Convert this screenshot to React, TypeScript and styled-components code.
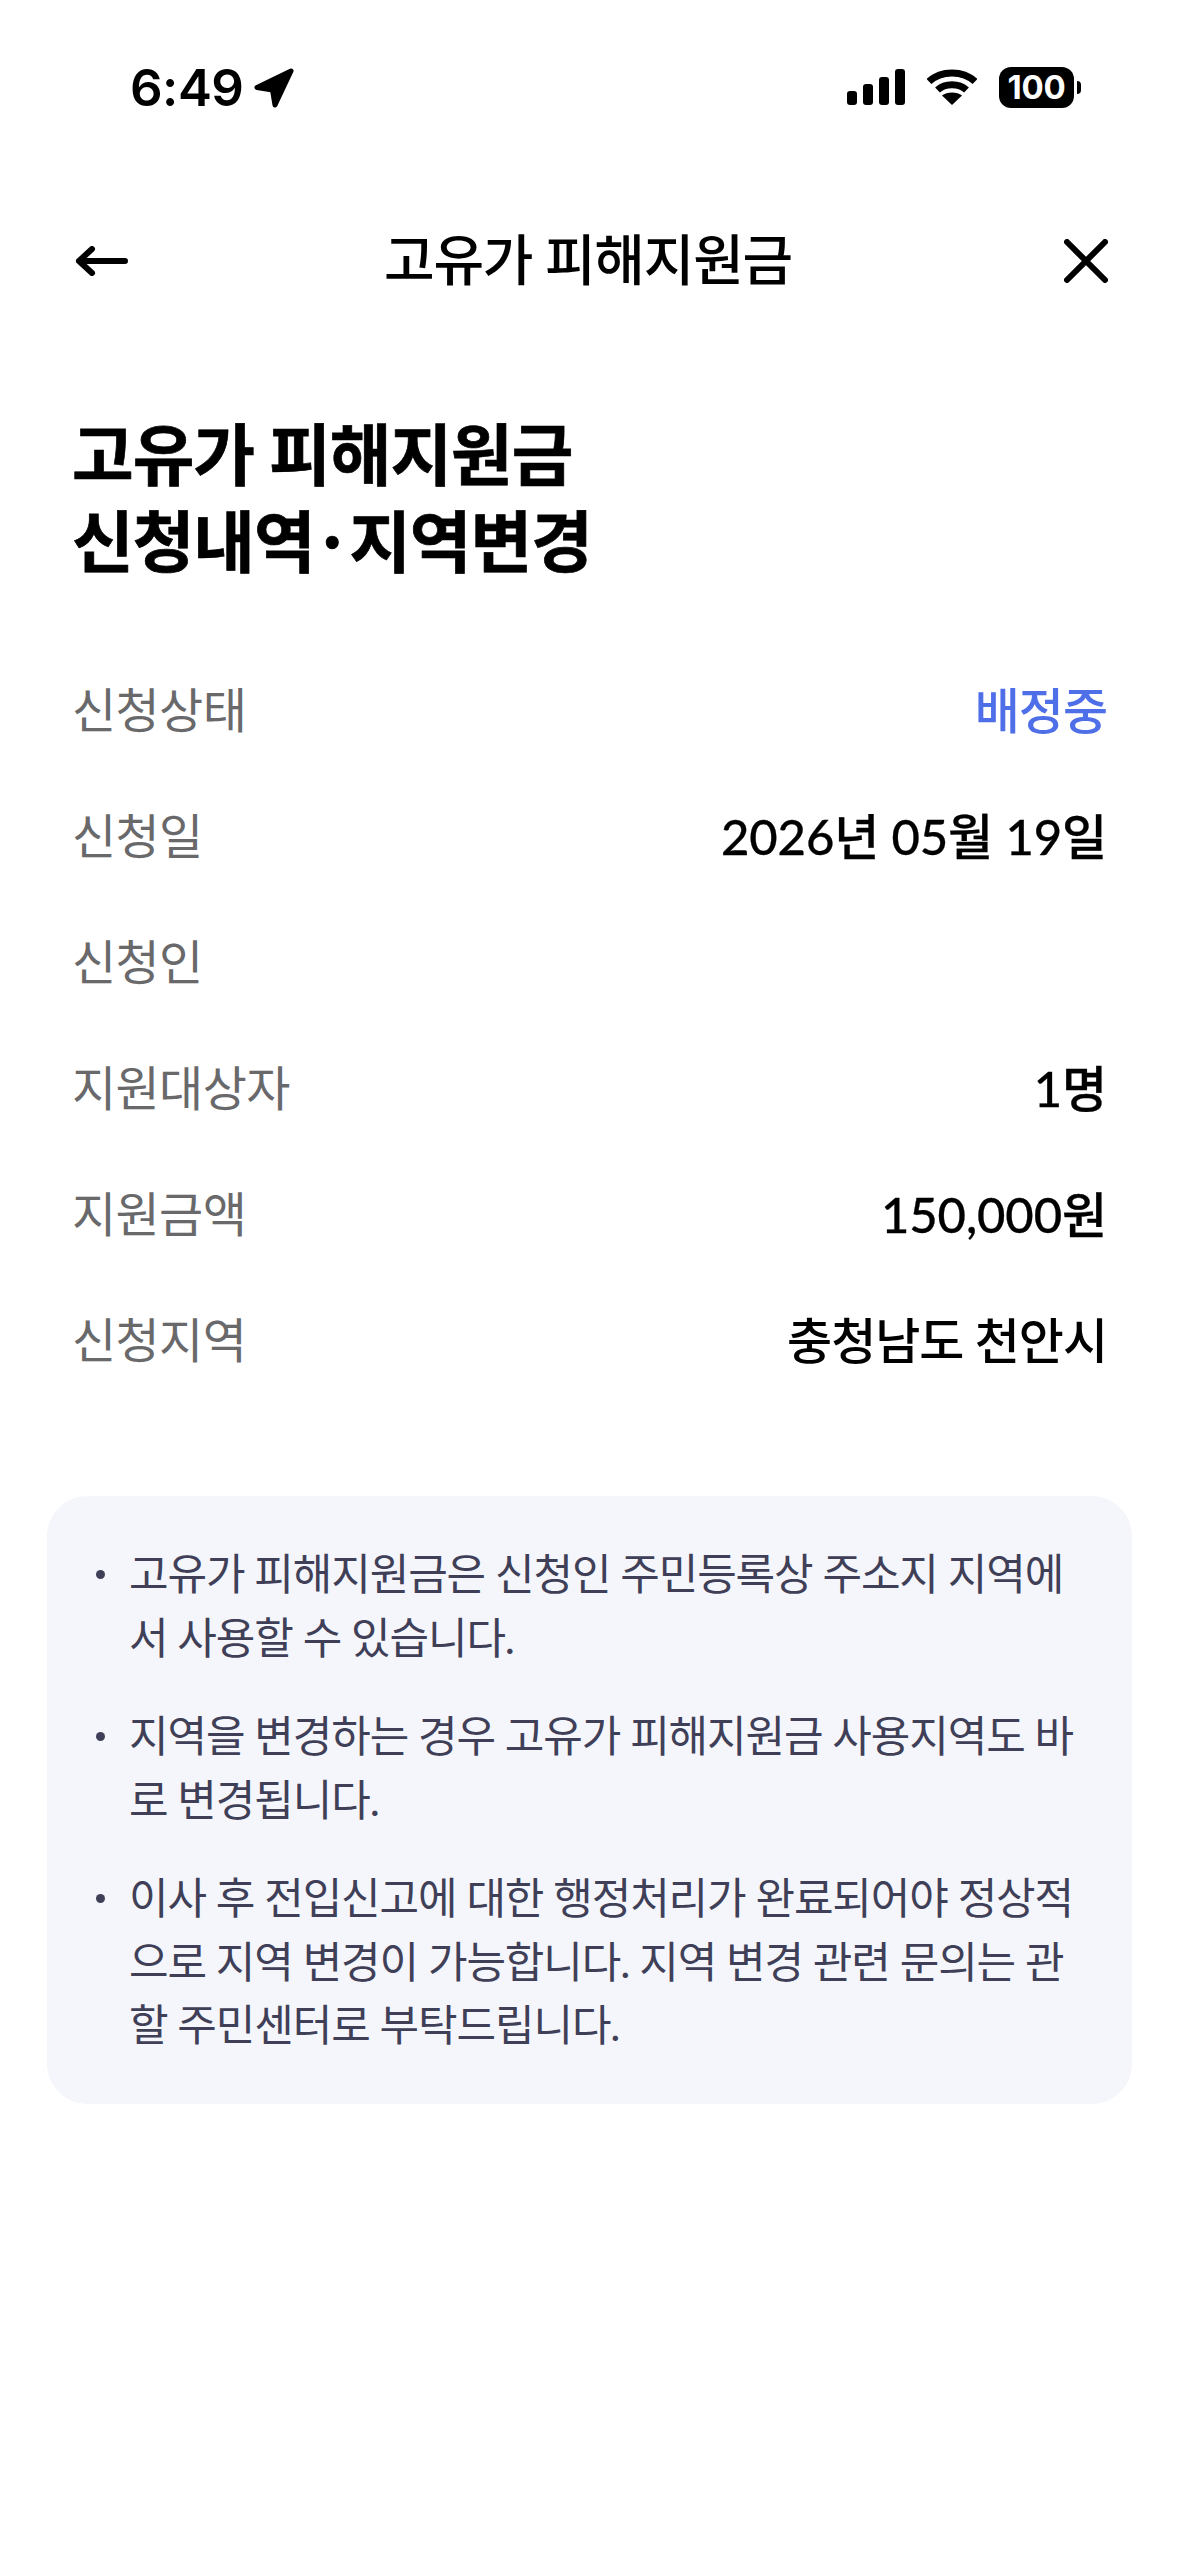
import React from "react";
import styled, { createGlobalStyle } from "styled-components";

const Global = createGlobalStyle`
  html, body { margin: 0; padding: 0; background: #fff; }
  body { font-family: Lato, "Noto Sans CJK KR", sans-serif; }
`;
const Page = styled.div`
  width: 1179px; height: 2556px; background: #fff; overflow: hidden; box-sizing: border-box;
`;
const StatusBar = styled.div`
  height: 217px; box-sizing: border-box; padding: 62px 105px 0 130px;
  display: flex; justify-content: space-between; align-items: flex-start;
`;
const Clock = styled.div`
  display: flex; align-items: center; gap: 11px;
  font: 600 51px/52px Inter, sans-serif; color: #000; letter-spacing: -0.5px;
`;
const StatusIcons = styled.div`
  display: flex; align-items: center; gap: 22px; height: 50px;
`;
const Battery = styled.div`
  position: relative; width: 75px; height: 41px; border-radius: 12px; background: #000; color: #fff;
  display: flex; align-items: center; justify-content: center;
  font: 700 33px/41px Inter, sans-serif; letter-spacing: -0.3px;
  &::after { content: ""; position: absolute; right: -7px; top: 14px; width: 4px; height: 13px; background: #000; border-radius: 0 7px 7px 0; }
`;
const NavBar = styled.div`
  height: 88px; padding: 0 71px; display: grid; grid-template-columns: 1fr auto 1fr; align-items: center;
`;
const NavTitle = styled.div`
  font: 500 55px/84px Lato, "Noto Sans CJK KR", sans-serif; color: #000; letter-spacing: -1.2px; padding: 0 3px 4px 0;
`;
const NavLeft = styled.div`
  display: flex; justify-content: flex-start; align-items: center; padding-left: 4px;
`;
const NavRight = styled.div`
  display: flex; justify-content: flex-end; align-items: center;
`;
const Title = styled.h1`
  margin: 108px 0 0; padding: 0 72px;
  font: 700 67px/83px Lato, "Noto Sans CJK KR", sans-serif; color: #000; letter-spacing: -1px;
  -webkit-text-stroke: 0.7px #000;
`;
const TitleDot = styled.span`
  font-family: "Noto Sans CJK KR", sans-serif; margin: 0 -2px;
`;
const Rows = styled.div`
  margin-top: 64px; padding: 0 72px; display: flex; flex-direction: column;
`;
const Row = styled.div`
  height: 126px; display: flex; justify-content: space-between; align-items: center;
`;
const Label = styled.span`
  font: 400 48px/60px Lato, "Noto Sans CJK KR", sans-serif; color: #69696b; letter-spacing: -0.6px;
`;
const Value = styled.span<{ $accent?: boolean; $latin?: boolean }>`
  font: 500 49px/60px Lato, "Noto Sans CJK KR", sans-serif;
  letter-spacing: ${(p) => (p.$latin ? "-0.1px" : "-1px")};
  color: ${(p) => (p.$accent ? "#4f6fe8" : "#000")};
  -webkit-text-stroke: ${(p) => (p.$latin ? "0.3px currentColor" : "0")};
`;
const NoteCard = styled.ul`
  margin: 93px 47px 0; padding: 46px 50px 48px 82px; list-style: none;
  background: #f5f6fb; border-radius: 40px; height: 608px; box-sizing: border-box;
  display: flex; flex-direction: column; gap: 35px;
`;
const Note = styled.li`
  position: relative; font: 400 43px/63.5px Lato, "Noto Sans CJK KR", sans-serif; color: #3f4058; letter-spacing: -1.1px;
  word-break: break-all;
  &::before { content: ""; position: absolute; left: -33px; top: 28px; width: 9px; height: 9px; border-radius: 50%; background: #3f4058; }
`;

const rows: { label: string; value?: string; accent?: boolean; latin?: boolean }[] = [
  { label: "신청상태", value: "배정중", accent: true },
  { label: "신청일", value: "2026년 05월 19일", latin: true },
  { label: "신청인" },
  { label: "지원대상자", value: "1명", latin: true },
  { label: "지원금액", value: "150,000원", latin: true },
  { label: "신청지역", value: "충청남도 천안시" },
];

const notes = [
  "고유가 피해지원금은 신청인 주민등록상 주소지 지역에서 사용할 수 있습니다.",
  "지역을 변경하는 경우 고유가 피해지원금 사용지역도 바로 변경됩니다.",
  "이사 후 전입신고에 대한 행정처리가 완료되어야 정상적으로 지역 변경이 가능합니다. 지역 변경 관련 문의는 관할 주민센터로 부탁드립니다.",
];

export default function App() {
  return (
    <Page>
      <Global />
      <StatusBar>
        <Clock>
          6:49
          <svg width="40" height="40" viewBox="0 0 40 40">
            <path d="M37 3 3 19.500l15.500 2.500 2.500 15z" fill="#000" stroke="#000" strokeWidth="5" strokeLinejoin="round" />
          </svg>
        </Clock>
        <StatusIcons>
          <svg width="58" height="36" viewBox="0 0 58 36">
            <rect x="0" y="22" width="10" height="14" rx="3" />
            <rect x="16" y="15" width="10" height="21" rx="3" />
            <rect x="32" y="8" width="10" height="28" rx="3" />
            <rect x="48" y="0" width="10" height="36" rx="3" />
          </svg>
          <svg width="50" height="36" viewBox="0 0 50 36">
            <path d="M2 12.500C14 1 36 1 48 12.500" fill="none" stroke="#000" strokeWidth="7" />
            <path d="M10.500 21C18 14 32 14 39.500 21" fill="none" stroke="#000" strokeWidth="7" />
            <path d="M25 36 15 26.500C20 22.500 30 22.500 35 26.500z" fill="#000" />
          </svg>
          <Battery>100</Battery>
        </StatusIcons>
      </StatusBar>
      <NavBar>
        <NavLeft>
          <svg width="53" height="30" viewBox="0 0 53 30">
            <path d="M4 15h46M17 3 4 15l13 12" fill="none" stroke="#000" strokeWidth="6" strokeLinecap="round" strokeLinejoin="round" />
          </svg>
        </NavLeft>
        <NavTitle>고유가 피해지원금</NavTitle>
        <NavRight>
          <svg width="44" height="44" viewBox="0 0 44 44">
            <path d="M3 3l38 38M41 3 3 41" fill="none" stroke="#000" strokeWidth="6" strokeLinecap="round" />
          </svg>
        </NavRight>
      </NavBar>
      <Title>
        고유가 피해지원금
        <br />
        신청내역<TitleDot>·</TitleDot>지역변경
      </Title>
      <Rows>
        {rows.map((r) => (
          <Row key={r.label}>
            <Label>{r.label}</Label>
            {r.value && (
              <Value $accent={r.accent} $latin={r.latin}>
                {r.value}
              </Value>
            )}
          </Row>
        ))}
      </Rows>
      <NoteCard>
        {notes.map((n) => (
          <Note key={n}>{n}</Note>
        ))}
      </NoteCard>
    </Page>
  );
}
